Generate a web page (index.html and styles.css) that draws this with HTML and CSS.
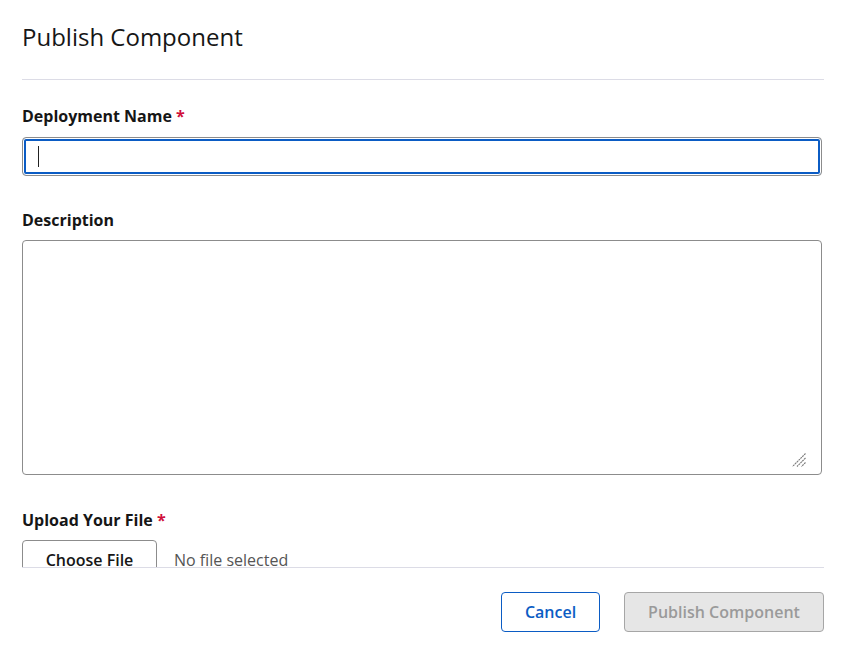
FILE: index.html
```html
<!DOCTYPE html>
<html lang="en">
<head>
<meta charset="utf-8">
<title>Publish Component</title>
<link rel="stylesheet" href="styles.css">
</head>
<body>
<div class="modal">
  <header class="modal-header">
    <h1 class="modal-title">Publish Component</h1>
  </header>
  <main class="modal-body">
    <div class="field field-name">
      <label class="field-label" for="dep-name">Deployment Name <span class="req">*</span></label>
      <div class="input-wrap">
        <input class="text-input is-focused" id="dep-name" type="text">
        <span class="caret"></span>
      </div>
    </div>
    <div class="field field-desc">
      <label class="field-label label-tight" for="desc">Description</label>
      <div class="area-wrap">
        <textarea class="text-area" id="desc"></textarea>
        <svg class="grip" width="15" height="16" viewBox="0 0 15 16" aria-hidden="true">
          <path d="M14.5 1.5 L1.5 14.5 M14.5 6 L6 14.5 M14.5 10.5 L10.5 14.5" stroke="#7a7a7a" stroke-width="1.1" fill="none" stroke-dasharray="2 0.6"/>
        </svg>
      </div>
    </div>
    <div class="field">
      <span class="field-label label-tight">Upload Your File <span class="req">*</span></span>
      <div class="file-row">
        <span class="file-btn">Choose File</span>
        <span class="file-status">No file selected</span>
      </div>
    </div>
  </main>
  <footer class="modal-footer">
    <button class="btn btn-secondary" type="button">Cancel</button>
    <button class="btn btn-disabled" type="button" disabled>Publish Component</button>
  </footer>
</div>
</body>
</html>
```

FILE: styles.css
```css
* { box-sizing: border-box; }
html, body {
  margin: 0;
  padding: 0;
  background: #ffffff;
}
body {
  font-family: "Open Sans", "Noto Sans", sans-serif;
  color: #161616;
}
.modal {
  width: 843px;
  height: 653px;
  display: flex;
  flex-direction: column;
  overflow: hidden;
}
.modal-header {
  margin: 0 19px 0 22px;
  padding: 21px 0 26px;
  border-bottom: 1px solid #dcdce6;
}
.modal-title {
  margin: 0;
  font-size: 24px;
  line-height: 32px;
  font-weight: 400;
  color: #161616;
}
.modal-body {
  flex: 1;
  min-height: 0;
  overflow: hidden;
  padding: 24px 21px 0 22px;
}
.field { margin-bottom: 32px; }
.field-desc { margin-bottom: 33px; }
.field-label {
  display: block;
  font-size: 16px;
  line-height: 24px;
  font-weight: 700;
  margin-bottom: 9px;
  color: #161616;
}
.label-tight { margin-bottom: 8px; }
.req { color: #d0103a; }
.input-wrap { position: relative; }
.text-input {
  display: block;
  width: 100%;
  height: 39px;
  border: 1px solid #8c8c8c;
  border-radius: 4px;
  padding: 0 15px;
  font: inherit;
  font-size: 16px;
  outline: none;
  background: #fff;
}
.text-input.is-focused {
  box-shadow: inset 0 0 0 1px #ffffff, inset 0 0 0 3px #0b5cc4;
}
.caret {
  position: absolute;
  left: 16px;
  top: 9px;
  width: 1px;
  height: 21px;
  background: #222;
}
.area-wrap { position: relative; }
.text-area {
  display: block;
  width: 100%;
  height: 235px;
  border: 1px solid #8c8c8c;
  border-radius: 4px;
  font: inherit;
  font-size: 16px;
  padding: 8px 15px;
  resize: none;
  outline: none;
}
.grip {
  position: absolute;
  right: 16px;
  bottom: 7px;
}
.file-row {
  display: flex;
  align-items: center;
  gap: 17px;
}
.file-btn {
  display: flex;
  align-items: center;
  justify-content: center;
  width: 135px;
  height: 40px;
  border: 1px solid #8c8c8c;
  border-radius: 4px;
  font-size: 16px;
  font-weight: 600;
  color: #161616;
  background: #fff;
}
.file-status {
  font-size: 16px;
  color: #555555;
}
.modal-footer {
  margin: 0 19px 0 22px;
  padding: 24px 0 21px;
  border-top: 1px solid #dcdce6;
  display: flex;
  justify-content: flex-end;
  gap: 24px;
}
.btn {
  height: 40px;
  border-radius: 4px;
  font-family: "Open Sans", "Noto Sans", sans-serif;
  font-size: 16px;
  font-weight: 600;
  padding: 0;
  background: #fff;
}
.btn-secondary {
  width: 99px;
  border: 1px solid #0b5cc4;
  color: #0b5cc4;
}
.btn-disabled {
  width: 200px;
  border: 1px solid #a6a6a6;
  background: #e6e6e6;
  color: #9a9a9a;
}
```
